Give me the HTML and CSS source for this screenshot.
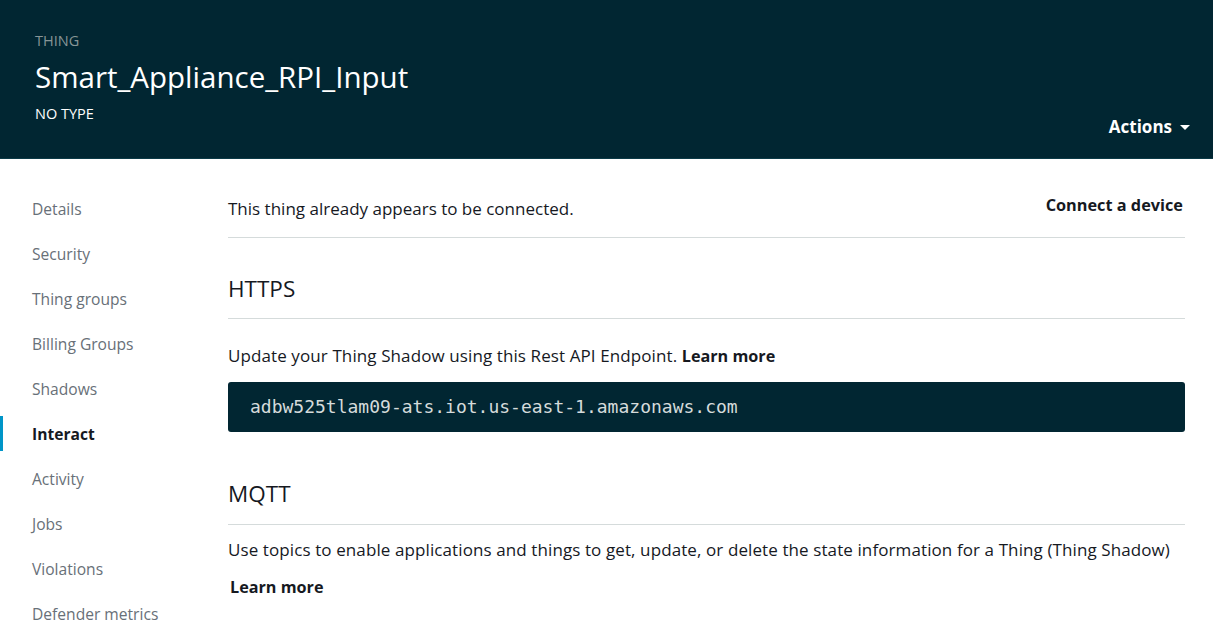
FILE: index.html
```html
<!DOCTYPE html>
<html lang="en">
<head>
<meta charset="utf-8">
<title>Smart_Appliance_RPI_Input</title>
<link rel="stylesheet" href="styles.css">
</head>
<body>
<header class="hero">
  <div class="hero-text">
    <div class="eyebrow">THING</div>
    <h1 class="title">Smart_Appliance_RPI_Input</h1>
    <div class="subtype">NO TYPE</div>
  </div>
  <button class="actions">Actions <span class="caret"></span></button>
</header>
<div class="layout">
  <nav class="sidenav">
    <a class="nav-item">Details</a>
    <a class="nav-item">Security</a>
    <a class="nav-item">Thing groups</a>
    <a class="nav-item">Billing Groups</a>
    <a class="nav-item">Shadows</a>
    <a class="nav-item active">Interact</a>
    <a class="nav-item">Activity</a>
    <a class="nav-item">Jobs</a>
    <a class="nav-item">Violations</a>
    <a class="nav-item">Defender metrics</a>
  </nav>
  <main class="content">
    <div class="status-row">
      <p class="status">This thing already appears to be connected.</p>
      <a class="connect">Connect a device</a>
    </div>
    <h2 class="section-title">HTTPS</h2>
    <p class="desc">Update your Thing Shadow using this Rest API Endpoint. <a class="learn">Learn more</a></p>
    <div class="endpoint">adbw525tlam09-ats.iot.us-east-1.amazonaws.com</div>
    <h2 class="section-title mqtt">MQTT</h2>
    <p class="desc mqtt-desc">Use topics to enable applications and things to get, update, or delete the state information for a Thing (Thing Shadow)</p>
    <a class="learn block">Learn more</a>
  </main>
</div>
</body>
</html>
```
FILE: styles.css
```css
* { box-sizing: border-box; }
html, body { margin: 0; padding: 0; }
body {
  font-family: "Open Sans", "Liberation Sans", Arial, sans-serif;
  background: #fff;
  color: #16191f;
  width: 1213px;
  height: 628px;
  overflow: hidden;
}
.hero {
  background: #012632;
  height: 159px;
  border-bottom: 1px solid #0b3a47;
  display: flex;
  justify-content: space-between;
  align-items: flex-end;
  padding: 0 23px 20px 35px;
}
.hero-text {
  align-self: flex-start;
  padding-top: 31px;
}
.eyebrow {
  color: #879596;
  font-size: 14.5px;
  line-height: 20px;
}
.title {
  margin: 8px 0 0;
  color: #fff;
  font-size: 29.5px;
  font-weight: 400;
  line-height: 36px;
}
.subtype {
  margin-top: 10px;
  color: #fff;
  font-size: 14.5px;
  line-height: 18px;
}
.actions {
  background: none;
  border: 0;
  padding: 0;
  color: #fff;
  font-family: inherit;
  font-size: 17px;
  font-weight: 700;
  display: flex;
  align-items: center;
  gap: 8px;
}
.caret {
  width: 0;
  height: 0;
  border-left: 5px solid transparent;
  border-right: 5px solid transparent;
  border-top: 5px solid #fff;
  margin-top: 2px;
}
.layout {
  display: flex;
  padding-top: 38px;
}
.sidenav {
  width: 228px;
  flex: none;
  display: flex;
  flex-direction: column;
}
.nav-item {
  display: block;
  padding-left: 32px;
  height: 45px;
  line-height: 24px;
  font-size: 15.6px;
  color: #687078;
  position: relative;
}
.nav-item.active {
  color: #16191f;
  font-weight: 700;
}
.nav-item.active::before {
  content: "";
  position: absolute;
  left: 0;
  top: -6px;
  width: 3px;
  height: 35px;
  background: #0095c8;
}
.content {
  width: 957px;
  flex: none;
}
.status-row {
  display: flex;
  justify-content: space-between;
  align-items: flex-start;
  border-bottom: 1px solid #d5dbdb;
  height: 41px;
}
.status {
  margin: 0;
  font-size: 17px;
  line-height: 24px;
}
.connect {
  font-size: 16.3px;
  font-weight: 700;
  line-height: 16px;
  padding-right: 2px;
}
.section-title {
  margin: 0;
  font-size: 22.5px;
  font-weight: 400;
  line-height: 28px;
  padding-top: 37px;
  padding-bottom: 15px;
  border-bottom: 1px solid #d5dbdb;
}
.section-title.mqtt {
  padding-top: 48px;
  padding-bottom: 16px;
}
.desc {
  margin: 0;
  padding-top: 25px;
  font-size: 17px;
  line-height: 24px;
  letter-spacing: 0.1px;
}
.desc.mqtt-desc {
  padding-top: 13px;
}
.learn {
  font-weight: 700;
  font-size: 16.2px;
  letter-spacing: 0;
}
.learn.block {
  display: block;
  margin-top: 13px;
  padding-left: 2px;
  line-height: 24px;
}
.endpoint {
  margin-top: 14px;
  height: 50px;
  background: #012632;
  border-radius: 3px;
  color: #d5dbdb;
  font-family: "DejaVu Sans Mono", "Liberation Mono", monospace;
  font-size: 18px;
  line-height: 50px;
  padding-left: 22px;
}
```
